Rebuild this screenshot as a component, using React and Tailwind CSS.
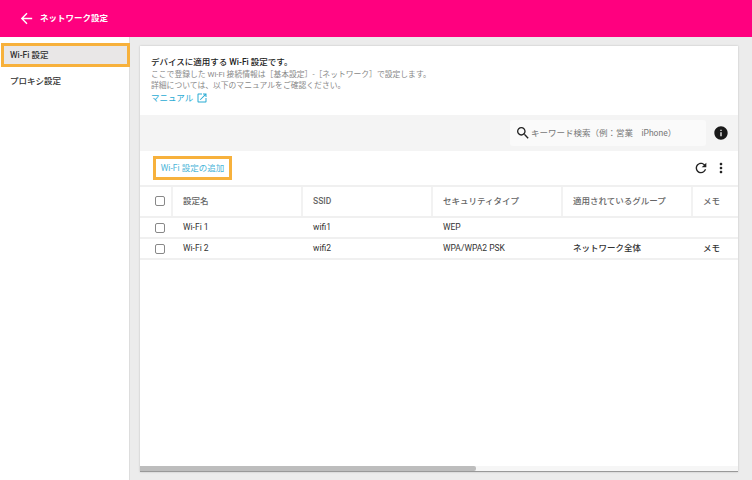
import React from "react";

function Icon({ size, d, className }) {
    return (
        <svg width={size} height={size} viewBox="0 0 24 24" fill="currentColor" className={"shrink-0 " + (className || "")}>
            <path d={d} />
        </svg>
    );
}

const arrowBack = "M20 11H7.83l5.59-5.59L12 4l-8 8 8 8 1.41-1.41L7.83 13H20v-2z";
const openNew = "M19 19H5V5h7V3H5c-1.11 0-2 .9-2 2v14c0 1.1.89 2 2 2h14c1.1 0 2-.9 2-2v-7h-2v7zM14 3v2h3.59l-9.83 9.83 1.41 1.41L19 6.41V10h2V3h-7z";
const search = "M15.5 14h-.79l-.28-.27C15.41 12.59 16 11.11 16 9.5 16 5.91 13.09 3 9.5 3S3 5.91 3 9.5 5.91 16 9.5 16c1.61 0 3.09-.59 4.23-1.57l.27.28v.79l5 4.99L20.49 19l-4.99-5zm-6 0C7.01 14 5 11.99 5 9.5S7.01 5 9.5 5 14 7.01 14 9.5 11.99 14 9.5 14z";
const info = "M12 2C6.48 2 2 6.48 2 12s4.48 10 10 10 10-4.48 10-10S17.52 2 12 2zm1 15h-2v-6h2v6zm0-8h-2V7h2v2z";
const refresh = "M17.65 6.35C16.2 4.9 14.21 4 12 4c-4.42 0-7.99 3.58-7.99 8s3.57 8 7.99 8c3.73 0 6.84-2.55 7.73-6h-2.08c-.82 2.33-3.04 4-5.65 4-3.31 0-6-2.69-6-6s2.69-6 6-6c1.66 0 3.14.69 4.22 1.78L13 11h7V4l-2.35 2.35z";
const moreVert = "M12 8c1.1 0 2-.9 2-2s-.9-2-2-2-2 .9-2 2 .9 2 2 2zm0 2c-1.1 0-2 .9-2 2s.9 2 2 2 2-.9 2-2-.9-2-2-2zm0 6c-1.1 0-2 .9-2 2s.9 2 2 2 2-.9 2-2-.9-2-2-2z";

function Check() {
    return <div className="w-[10px] h-[10px] border border-[#888] rounded-[2px] bg-white"></div>;
}

function HeadCell({ w, children }) {
    return (
        <div className={"flex items-center h-full shrink-0 pl-[10px] border-l-2 border-[#f2f2f2] text-[8.5px] font-medium text-[#666] " + w}>
            {children}
        </div>
    );
}

function Cell({ w, children, bold }) {
    return (
        <div className={"pl-[11px] shrink-0 text-[8.5px] text-[#333] " + w + (bold ? " font-medium" : "")}>
            {children}
        </div>
    );
}

function Row({ name, ssid, sec, group, memo }) {
    return (
        <div className="flex items-center h-[21px] border-b-2 border-[#f0f0f0]">
            <div className="w-[32px] shrink-0 pl-[15px]">
                <Check />
            </div>
            <Cell w="w-[130px]">{name}</Cell>
            <Cell w="w-[130px]">{ssid}</Cell>
            <Cell w="w-[130px]">{sec}</Cell>
            <Cell w="w-[130px]" bold>{group}</Cell>
            <Cell w="w-[46px]" bold>{memo}</Cell>
        </div>
    );
}

export default function App() {
    return (
        <div className="w-[752px] h-[480px] flex flex-col overflow-hidden bg-[#ececec] font-['Roboto','Noto_Sans_CJK_JP',sans-serif]">
            <header className="h-[37px] shrink-0 bg-[#ff007f] flex items-center pl-[18px] text-white">
                <Icon size={17} d={arrowBack} />
                <span className="ml-[5px] text-[8.5px] font-bold">ネットワーク設定</span>
            </header>
            <div className="flex flex-1 min-h-0">
                <aside className="w-[130px] shrink-0 bg-white border-r border-[#ddd] pt-[6px] pl-px">
                    <div className="h-[24px] w-[129px] border-[3px] border-[#f7b13c] bg-[#e9e7e7] flex items-center pl-[6px] text-[8.5px] font-medium text-[#333]">
                        Wi-Fi 設定
                    </div>
                    <div className="mt-[8px] pl-[9px] text-[8.5px] font-medium text-[#333]">プロキシ設定</div>
                </aside>
                <main className="flex-1 pl-[10px] pr-[2px] pt-[9px] pb-[8px] min-w-0">
                    <div className="h-full w-[598px] bg-white flex flex-col shadow-[0_0_2px_rgba(0,0,0,0.2)]">
                        <div className="h-[69px] shrink-0 pl-[11px] pt-[10px]">
                            <div className="text-[8.5px] leading-[13px] font-medium text-[#222]">デバイスに適用する Wi-Fi 設定です。</div>
                            <div className="text-[7.8px] leading-[11px] text-[#888]">ここで登録した Wi-Fi 接続情報は［基本設定］-［ネットワーク］で設定します。</div>
                            <div className="text-[7.8px] leading-[11px] text-[#888]">詳細については、以下のマニュアルをご確認ください。</div>
                            <div className="flex items-center gap-[3px] text-[8.5px] leading-[14px] text-[#29abd4]">
                                マニュアル
                                <Icon size={12} d={openNew} />
                            </div>
                        </div>
                        <div className="h-[36px] shrink-0 bg-[#f4f4f4] flex items-center justify-end pr-[9px]">
                            <div className="w-[196px] h-[26px] bg-[#fafafa] rounded-[3px] flex items-center pl-[5px] text-[8.5px] text-[#777]">
                                <Icon size={16} d={search} className="text-[#222]" />
                                <span>キーワード検索（例：営業　iPhone）</span>
                            </div>
                            <Icon size={16} d={info} className="ml-[7px] text-[#1a1a1a]" />
                        </div>
                        <div className="h-[34px] shrink-0 flex items-center justify-between pl-[13px] pr-[9px]">
                            <div className="w-[79px] h-[24px] border-[3px] border-[#f7b13c] flex items-center justify-center text-[8.5px] text-[#4bb5d8]">
                                Wi-Fi 設定の追加
                            </div>
                            <div className="flex items-center gap-[4px] text-[#222]">
                                <Icon size={16} d={refresh} />
                                <Icon size={16} d={moreVert} />
                            </div>
                        </div>
                        <div className="flex-1 min-h-0 overflow-hidden">
                            <div className="flex items-center h-[33px] border-y-2 border-[#f0f0f0]">
                                <div className="w-[31px] shrink-0 pl-[15px] -mt-[1px]">
                                    <Check />
                                </div>
                                <HeadCell w="w-[130px]">設定名</HeadCell>
                                <HeadCell w="w-[130px]">SSID</HeadCell>
                                <HeadCell w="w-[130px]">セキュリティタイプ</HeadCell>
                                <HeadCell w="w-[130px]">適用されているグループ</HeadCell>
                                <HeadCell w="w-[47px]">メモ</HeadCell>
                            </div>
                            <Row name="Wi-Fi 1" ssid="wifi1" sec="WEP" group="" memo="" />
                            <Row name="Wi-Fi 2" ssid="wifi2" sec="WPA/WPA2 PSK" group="ネットワーク全体" memo="メモ" />
                        </div>
                        <div className="h-[6px] shrink-0 bg-[#f6f6f6] border-b border-[#999]">
                            <div className="h-full w-[336px] bg-[#bdbdbd] rounded-r-[2px]"></div>
                        </div>
                    </div>
                </main>
            </div>
        </div>
    );
}
